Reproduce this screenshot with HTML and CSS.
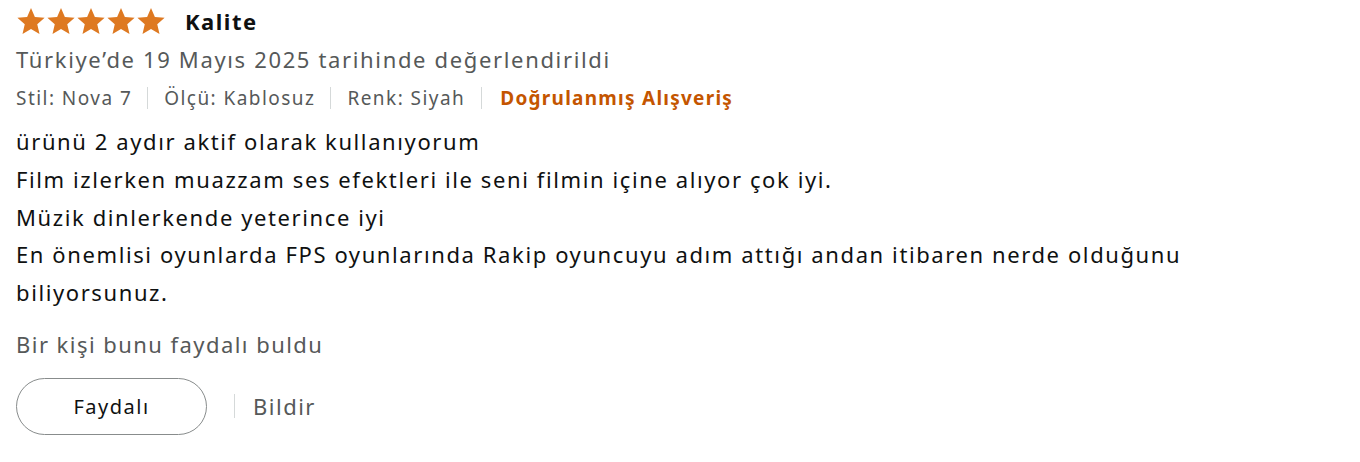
FILE: index.html
```html
<!DOCTYPE html>
<html lang="tr">
<head>
<meta charset="utf-8">
<link rel="stylesheet" href="styles.css">
</head>
<body>
<div class="review">
  <div class="title-row">
    <span class="stars" aria-label="5 üzerinden 5 yıldız">
      <svg viewBox="0 0 24 24" class="star"><path d="M12 1.5l3.1 7.2 7.8.7-5.9 5.2 1.8 7.7L12 18.3l-6.8 4 1.8-7.7L1.1 9.4l7.8-.7z"/></svg>
      <svg viewBox="0 0 24 24" class="star"><path d="M12 1.5l3.1 7.2 7.8.7-5.9 5.2 1.8 7.7L12 18.3l-6.8 4 1.8-7.7L1.1 9.4l7.8-.7z"/></svg>
      <svg viewBox="0 0 24 24" class="star"><path d="M12 1.5l3.1 7.2 7.8.7-5.9 5.2 1.8 7.7L12 18.3l-6.8 4 1.8-7.7L1.1 9.4l7.8-.7z"/></svg>
      <svg viewBox="0 0 24 24" class="star"><path d="M12 1.5l3.1 7.2 7.8.7-5.9 5.2 1.8 7.7L12 18.3l-6.8 4 1.8-7.7L1.1 9.4l7.8-.7z"/></svg>
      <svg viewBox="0 0 24 24" class="star"><path d="M12 1.5l3.1 7.2 7.8.7-5.9 5.2 1.8 7.7L12 18.3l-6.8 4 1.8-7.7L1.1 9.4l7.8-.7z"/></svg>
    </span>
    <span class="title">Kalite</span>
  </div>
  <div class="date">Türkiye’de 19 Mayıs 2025 tarihinde değerlendirildi</div>
  <div class="meta">
    <span class="meta-item">Stil: Nova 7</span>
    <span class="sep"></span>
    <span class="meta-item">Ölçü: Kablosuz</span>
    <span class="sep"></span>
    <span class="meta-item">Renk: Siyah</span>
    <span class="sep"></span>
    <span class="verified">Doğrulanmış Alışveriş</span>
  </div>
  <div class="body">ürünü 2 aydır aktif olarak kullanıyorum<br>Film izlerken muazzam ses efektleri ile seni filmin içine alıyor çok iyi.<br>Müzik dinlerkende yeterince iyi<br>En önemlisi oyunlarda FPS oyunlarında Rakip oyuncuyu adım attığı andan itibaren nerde olduğunu biliyorsunuz.</div>
  <div class="helpful">Bir kişi bunu faydalı buldu</div>
  <div class="actions">
    <button class="btn">Faydalı</button>
    <span class="vsep"></span>
    <span class="report">Bildir</span>
  </div>
</div>
</body>
</html>
```
FILE: styles.css
```css
html, body {
  margin: 0;
  padding: 0;
  background: #ffffff;
}
body {
  font-family: "Noto Sans", "Open Sans", sans-serif;
  color: #0f1111;
  letter-spacing: 1.6px;
}
.review {
  padding: 6px 16px 0 16px;
  width: 1290px;
}
.title-row {
  display: flex;
  align-items: center;
  height: 30px;
}
.stars {
  display: flex;
}
.star {
  width: 30px;
  height: 30px;
  fill: #de7921;
}
.title {
  font-weight: 700;
  font-size: 22px;
  letter-spacing: 1.5px;
  margin-left: 19px;
  margin-top: -1px;
}
.date {
  color: #565959;
  font-size: 22px;
  letter-spacing: 1.65px;
  line-height: 38px;
  margin-top: 4px;
}
.meta {
  display: flex;
  align-items: center;
  font-size: 19px;
  letter-spacing: 1.45px;
  line-height: 38px;
  color: #565959;
  margin-top: 1px;
}
.sep {
  width: 1px;
  height: 22px;
  background: #d5d9d9;
  margin: 0 16px 0 15px;
}
.sep:nth-child(6) {
  margin: 0 18px 0 16px;
}
.verified {
  color: #c45500;
  font-weight: 700;
  letter-spacing: 1.25px;
}
.body {
  font-size: 22px;
  line-height: 37.75px;
  margin-top: 6px;
}
.helpful {
  color: #565959;
  font-size: 22px;
  letter-spacing: 1.45px;
  line-height: 38px;
  margin-top: 13px;
}
.actions {
  display: flex;
  align-items: center;
  margin-top: 15px;
}
.btn {
  width: 191px;
  height: 57px;
  border: 1px solid #888c8c;
  border-radius: 29px;
  background: #ffffff;
  font-family: inherit;
  font-size: 20px;
  letter-spacing: 1.5px;
  color: #0f1111;
  padding: 0;
}
.vsep {
  width: 1px;
  height: 24px;
  background: #d5d9d9;
  margin: 0 18px 0 27px;
}
.report {
  font-size: 22px;
  letter-spacing: 1.5px;
  color: #565959;
}
```
